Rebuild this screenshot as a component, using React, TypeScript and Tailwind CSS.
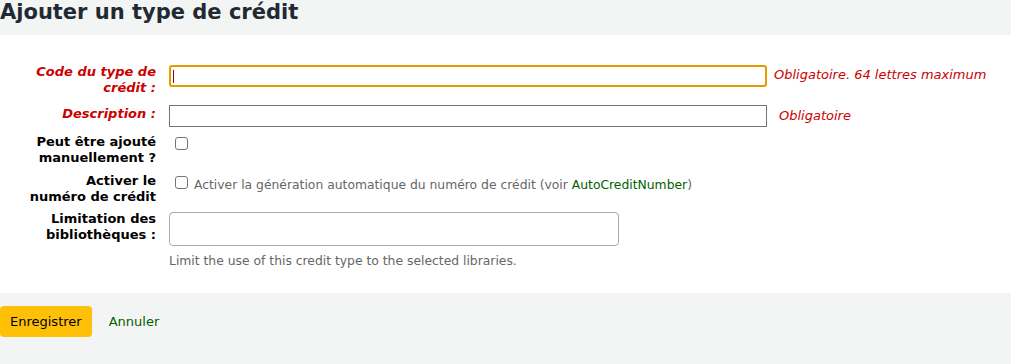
import React from "react";

const font = { fontFamily: '"DejaVu Sans", sans-serif' };

function Label({ children, required }: { children: React.ReactNode; required?: boolean }) {
  return (
    <label
      className={
        "w-[130px] shrink-0 text-right text-[13px] font-bold leading-[16px] " +
        (required ? "italic text-[#cc0000]" : "text-black")
      }
    >
      {children}
    </label>
  );
}

function Checkbox() {
  return <span className="mt-[3px] ml-[6px] block w-[13px] h-[13px] rounded-[3px] border border-[#767676] bg-white" />;
}

export default function App() {
  return (
    <div className="w-[1011px] h-[364px] bg-[#f3f4f4] text-[#1f2a33]" style={font}>
      <h1 className="h-[35px] text-[21px] font-bold leading-[24px]">Ajouter un type de crédit</h1>

      {/* form panel */}
      <div className="bg-white h-[258px] pt-[29px] pl-[26px]">
        <ul className="flex flex-col">
          <li className="flex items-start gap-[13px] h-[40px]">
            <Label required>Code du type de crédit :</Label>
            <div className="relative w-[598px] h-[22px] rounded-[3px] border-2 border-[#e69c00] mt-[1px]">
              <span className="absolute left-[2px] top-[3px] w-px h-[13px] bg-[#990000]" />
            </div>
            <span className="ml-[-6px] mt-[3px] text-[13px] italic leading-[16px] text-[#cc0000]">
              Obligatoire. 64 lettres maximum
            </span>
          </li>
          <li className="flex items-start gap-[13px] h-[30px]">
            <Label required>
              <span className="block mt-[2px]">Description :</span>
            </Label>
            <div className="w-[598px] h-[22px] border border-[#767676] mt-[1px]" />
            <span className="ml-[-1px] mt-[4px] text-[13px] italic leading-[16px] text-[#cc0000]">Obligatoire</span>
          </li>
          <li className="flex items-start gap-[13px] h-[39px]">
            <Label>Peut être ajouté manuellement ?</Label>
            <Checkbox />
          </li>
          <li className="flex items-start gap-[13px] h-[38px]">
            <Label>Activer le numéro de crédit</Label>
            <Checkbox />
            <span className="ml-[-7px] mt-[4px] text-[12.35px] leading-[16px] text-[#666]">
              Activer la génération automatique du numéro de crédit (voir{" "}
              <a className="text-[#006100]">AutoCreditNumber</a>)
            </span>
          </li>
          <li className="flex items-start gap-[13px]">
            <Label>Limitation des bibliothèques :</Label>
            <div className="flex flex-col">
              <div className="w-[450px] h-[34px] mt-[1px] rounded-[4px] border border-[#aaa] bg-white" />
              <span className="mt-[7px] text-[12.35px] leading-[16px] text-[#666]">
                Limit the use of this credit type to the selected libraries.
              </span>
            </div>
          </li>
        </ul>
      </div>

      {/* actions */}
      <div className="flex items-center gap-[17px] pt-[13px]">
        <button className="h-[31px] px-[10px] rounded-[4px] bg-[#ffc107] text-[13px] text-black">Enregistrer</button>
        <a className="text-[13px] text-[#006100]">Annuler</a>
      </div>
    </div>
  );
}
